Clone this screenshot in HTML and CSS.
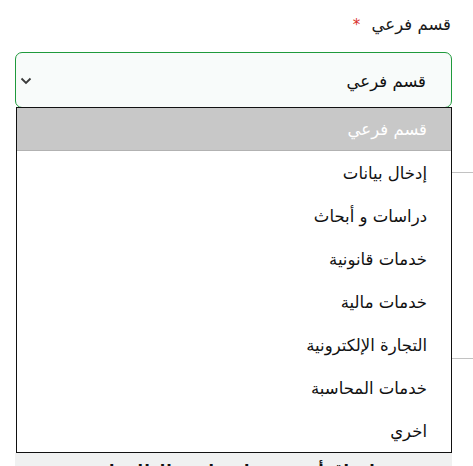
FILE: index.html
```html
<!DOCTYPE html>
<html lang="ar" dir="rtl">
<head>
<meta charset="utf-8">
<link rel="stylesheet" href="styles.css">
</head>
<body>
<div class="page">
  <div class="field">
    <div class="label">قسم فرعي <span class="req">*</span></div>
    <div class="select-wrap">
      <div class="select">
        <span class="value">قسم فرعي</span>
        <svg class="chev" width="12" height="8" viewBox="0 0 12 8"><path d="M1.5 1.5 L6 6 L10.5 1.5" fill="none" stroke="#3a3a3a" stroke-width="1.8"/></svg>
      </div>
      <ul class="menu">
        <li class="opt selected">قسم فرعي</li>
        <li class="opt">إدخال بيانات</li>
        <li class="opt">دراسات و أبحاث</li>
        <li class="opt">خدمات قانونية</li>
        <li class="opt">خدمات مالية</li>
        <li class="opt">التجارة الإلكترونية</li>
        <li class="opt">خدمات المحاسبة</li>
        <li class="opt">اخري</li>
      </ul>
    </div>
  </div>
  <div class="rule rule-1"></div>
  <div class="rule rule-2"></div>
  <div class="note">يرجى إرفاق أي مستندات داعمة للطلب إن وجدت</div>
</div>
</body>
</html>
```
FILE: styles.css
```css
* { box-sizing: border-box; }
html, body { margin: 0; padding: 0; background: #fff; }
body {
  font-family: "DejaVu Sans", "Noto Sans", sans-serif;
  color: #111;
  direction: rtl;
  height: 466px;
  overflow: hidden;
}
.page {
  padding: 13px 0 0 0;
}
.field {
  margin: 0 21px 0 15px;
}
.label {
  font-size: 16.5px;
  line-height: 24px;
  color: #1a1a1a;
  padding-right: 1px;
}
.req {
  color: #d9302b;
  font-size: 15px;
  margin-right: 6px;
}
.select-wrap {
  position: relative;
  margin-top: 15px;
}
.select {
  height: 56px;
  border: 1px solid #1f9a3c;
  border-radius: 7px;
  background: #f8fbfa;
  display: flex;
  align-items: center;
  justify-content: space-between;
  padding: 3px 25px 0 4px;
  font-size: 16.5px;
}
.value { color: #111; }
.chev { display: block; margin-top: -2px; }
.menu {
  position: absolute;
  top: 55px;
  left: 1px;
  right: 0;
  margin: 0;
  padding: 0;
  list-style: none;
  border: 1px solid #111;
  background: #fff;
  z-index: 5;
}
.opt {
  height: 43px;
  display: flex;
  align-items: center;
  padding-right: 24px;
  padding-top: 1px;
  font-size: 16.5px;
  color: #111;
}
.opt.selected {
  background: #c8c8c8;
  color: #fff;
  border-bottom: 1px solid #b2b2b2;
}
.rule {
  height: 1px;
  background: #c2c2c2;
  margin-left: 24px;
}
.rule-1 { margin-top: 64px; }
.rule-2 { margin-top: 185px; }
.note {
  margin: 94px 21px 0 15px;
  background: #f0f1f1;
  height: 40px;
  padding-top: 8px;
  text-align: center;
  font-size: 16px;
  font-weight: bold;
  color: #111;
}
```
